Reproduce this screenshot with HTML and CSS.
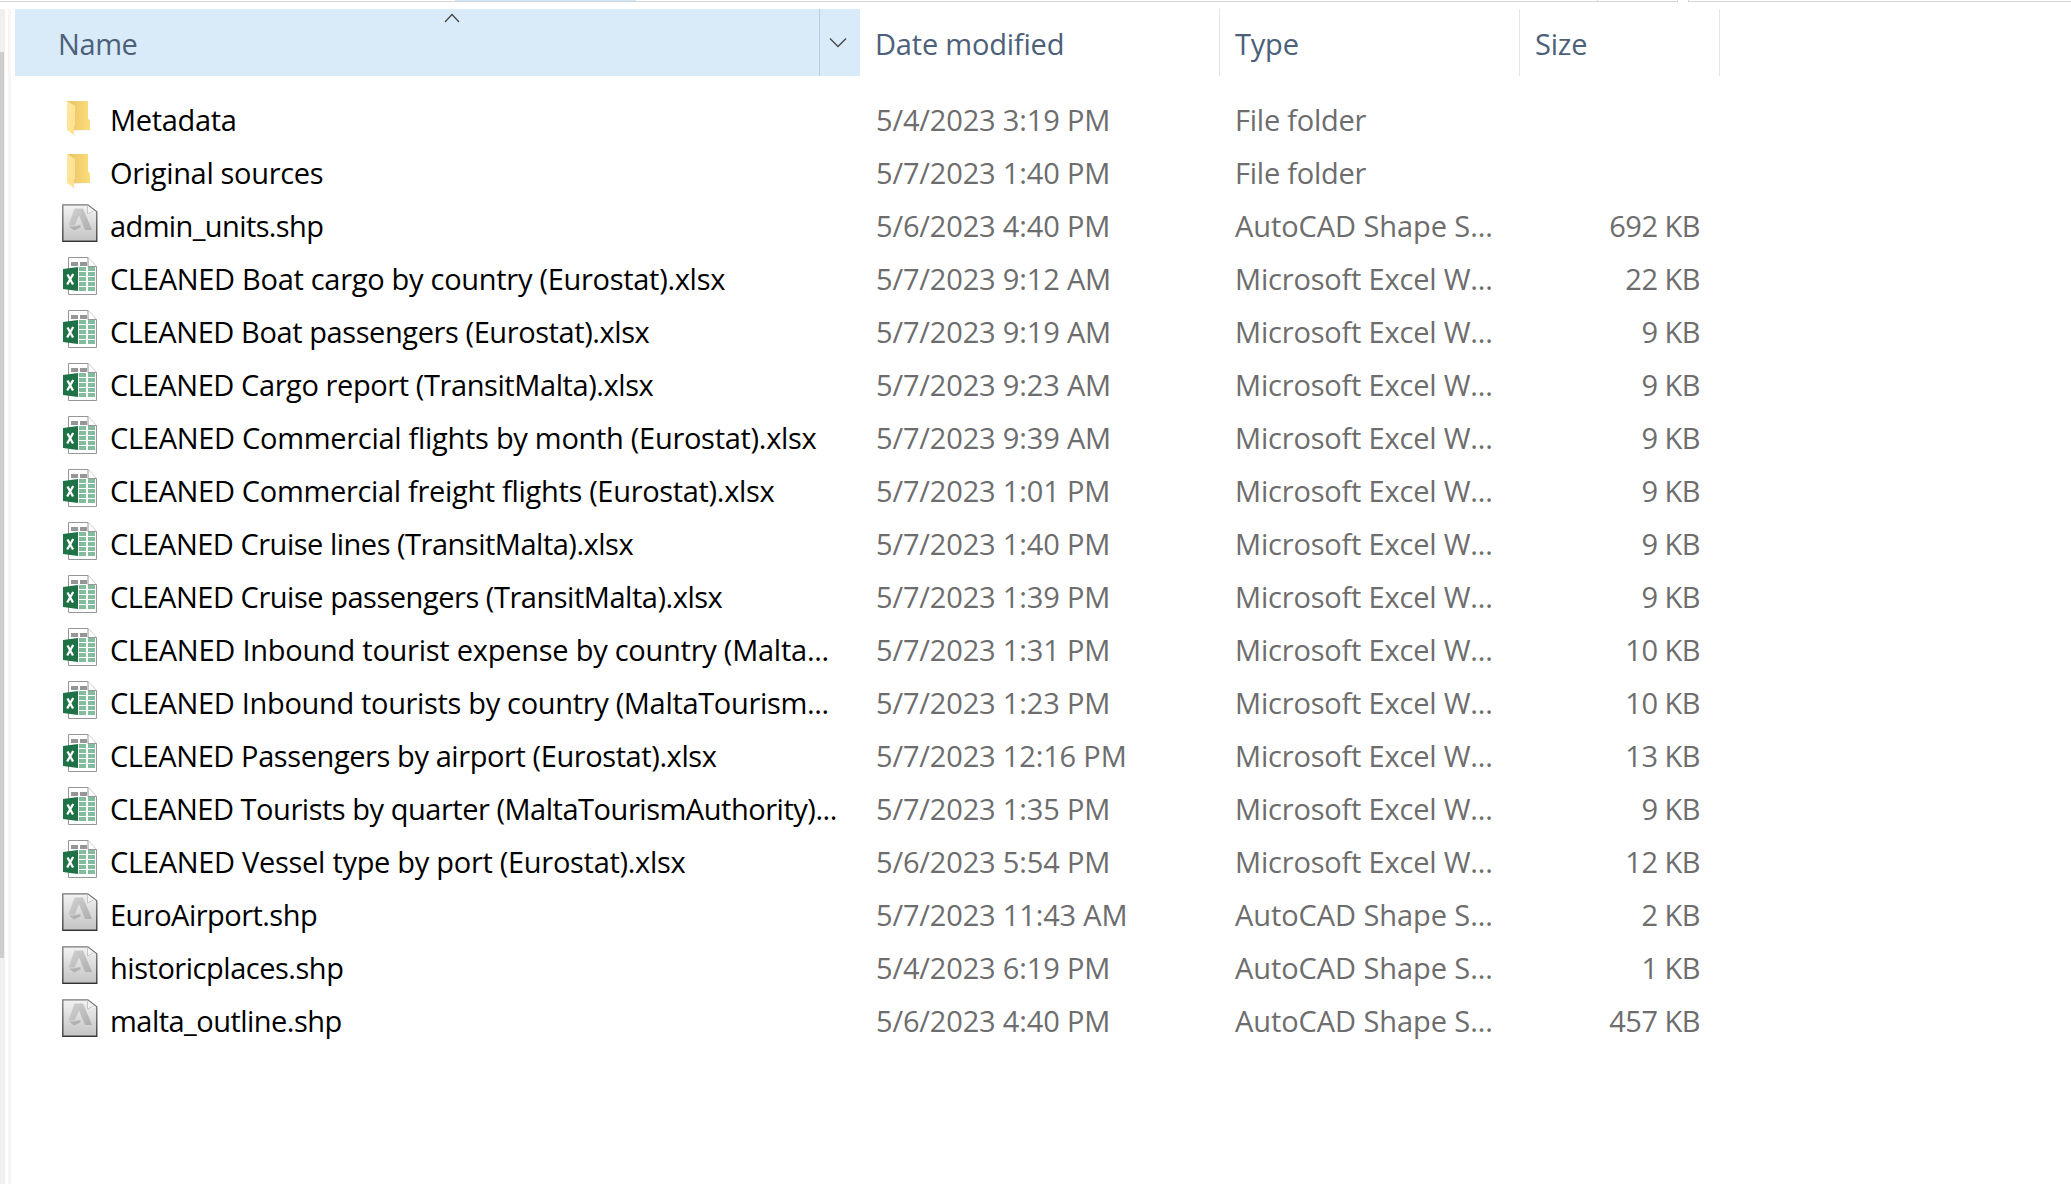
FILE: index.html
```html
<!DOCTYPE html>
<html lang="en">
<head>
<meta charset="utf-8">
<title>Files</title>
<link rel="stylesheet" href="styles.css">
</head>
<body>
<svg class="defs" width="0" height="0" aria-hidden="true">
  <defs>
    <linearGradient id="g-back" x1="0" x2="1" y1="0" y2="0"><stop offset="0.2" stop-color="#ebc768"/><stop offset="1" stop-color="#fddd7c"/></linearGradient>
    <linearGradient id="g-flap" x1="0" x2="1" y1="0" y2="1"><stop offset="0" stop-color="#ffe8a3"/><stop offset="1" stop-color="#ffe08a"/></linearGradient>
    <linearGradient id="g-page" x1="0" x2="0" y1="0" y2="1"><stop offset="0" stop-color="#f3f3f3"/><stop offset="1" stop-color="#c3c3c3"/></linearGradient>
    <linearGradient id="g-edge" x1="0" x2="0" y1="0" y2="1"><stop offset="0" stop-color="#777"/><stop offset="1" stop-color="#333"/></linearGradient>
    <linearGradient id="g-a" x1="0" x2="1" y1="0" y2="1"><stop offset="0" stop-color="#d2d2d2"/><stop offset="1" stop-color="#adadad"/></linearGradient>
  </defs>
  <symbol id="folder" viewBox="0 0 36 40">
    <path d="M12 34l18-1-1-1H12zM11 39l4-1-2-1z" fill="#eee"/>
    <path d="M5 4h21v17.500l2 2V33H8z" fill="url(#g-back)"/>
    <path d="M5 4l8 5v19.500l-1 1V38l-7-5z" fill="url(#g-flap)"/>
  </symbol>
  <symbol id="shp" viewBox="0 0 36 40">
    <path d="M.8 1.800h25l9 7v29.500H.8z" fill="url(#g-page)" stroke="url(#g-edge)" stroke-width="1.300"/>
    <path d="M1.500 38.300h33" stroke="#333" stroke-width="1.200"/>
    <path d="M25.500 2.500v8.500l8.500-2z" fill="#f4f4f4"/>
    <path d="M25.500 2.500v8.500l6-3" fill="none" stroke="#c6c6c6" stroke-width="1"/>
    <path d="M12.500 5.500h8.500l9 21.500h-7L17 12.500 12.500 22.500H6.500z" fill="url(#g-a)"/>
    <path d="M7 23.500h4.500l7-1.500v2.500L12 27.500z" fill="#b1b1b1"/>
  </symbol>
  <symbol id="xlsx" viewBox="0 0 36 40">
    <path d="M6.500 1.500h19.500l8.500 9v28h-28z" fill="#fff" stroke="#969696"/>
    <path d="M26 1.500v9h8.500" fill="#fff" stroke="#969696"/>
    <path d="M9 6h7v4H9zM18 6h7v4h-7z" fill="#969696"/>
    <path d="M17 11h7v4h-7zM26 11h7v4h-7zM17 16h7v4h-7zM26 16h7v4h-7zM17 21h7v4h-7zM26 21h7v4h-7zM17 26h7v4h-7zM26 26h7v4h-7zM17 31h7v4h-7zM26 31h7v4h-7z" fill="#84bd9e"/>
    <path d="M1 13l15-2v24L1 33z" fill="#1f7245"/>
    <path d="M5.500 18.500l5.500 10M11.200 18l-6 10.500" fill="none" stroke="#fff" stroke-width="2.300"/>
  </symbol>
</svg>
<div class="window">
  <div class="scrollbar"><div class="thumb"></div></div>
  <div class="splitter"></div>
  <main class="pane">
    <div class="topline"><i class="tab"></i><i class="tick"></i><i class="gap"></i></div>
    <header class="head">
      <div class="h-name"><span>Name</span>
        <svg class="sort" width="16" height="10" viewBox="0 0 16 10"><path d="M1 9l7-7.500L15 9" fill="none" stroke="#444" stroke-width="1.300"/></svg>
        <div class="drop"><svg width="18" height="12" viewBox="0 0 18 12"><path d="M1 1.500l8 8 8-8" fill="none" stroke="#444" stroke-width="1.300"/></svg></div>
      </div>
      <div class="h-date">Date modified</div><div class="h-type">Type</div><div class="h-size">Size</div>
    </header>
    <div class="list">
      <div class="row"><svg class="icon"><use href="#folder"/></svg><span class="name n1">Metadata</span><span class="date">5/4/2023 3:19 PM</span><span class="type fold">File folder</span><span class="size"></span></div>
      <div class="row"><svg class="icon"><use href="#folder"/></svg><span class="name n2">Original sources</span><span class="date">5/7/2023 1:40 PM</span><span class="type fold">File folder</span><span class="size"></span></div>
      <div class="row"><svg class="icon"><use href="#shp"/></svg><span class="name n3">admin_units.shp</span><span class="date">5/6/2023 4:40 PM</span><span class="type cad">AutoCAD Shape S...</span><span class="size">692 KB</span></div>
      <div class="row"><svg class="icon"><use href="#xlsx"/></svg><span class="name n4">CLEANED Boat cargo by country (Eurostat).xlsx</span><span class="date">5/7/2023 9:12 AM</span><span class="type">Microsoft Excel W...</span><span class="size">22 KB</span></div>
      <div class="row"><svg class="icon"><use href="#xlsx"/></svg><span class="name n5">CLEANED Boat passengers (Eurostat).xlsx</span><span class="date">5/7/2023 9:19 AM</span><span class="type">Microsoft Excel W...</span><span class="size">9 KB</span></div>
      <div class="row"><svg class="icon"><use href="#xlsx"/></svg><span class="name n6">CLEANED Cargo report (TransitMalta).xlsx</span><span class="date">5/7/2023 9:23 AM</span><span class="type">Microsoft Excel W...</span><span class="size">9 KB</span></div>
      <div class="row"><svg class="icon"><use href="#xlsx"/></svg><span class="name n7">CLEANED Commercial flights by month (Eurostat).xlsx</span><span class="date">5/7/2023 9:39 AM</span><span class="type">Microsoft Excel W...</span><span class="size">9 KB</span></div>
      <div class="row"><svg class="icon"><use href="#xlsx"/></svg><span class="name n8">CLEANED Commercial freight flights (Eurostat).xlsx</span><span class="date">5/7/2023 1:01 PM</span><span class="type">Microsoft Excel W...</span><span class="size">9 KB</span></div>
      <div class="row"><svg class="icon"><use href="#xlsx"/></svg><span class="name n9">CLEANED Cruise lines (TransitMalta).xlsx</span><span class="date">5/7/2023 1:40 PM</span><span class="type">Microsoft Excel W...</span><span class="size">9 KB</span></div>
      <div class="row"><svg class="icon"><use href="#xlsx"/></svg><span class="name n10">CLEANED Cruise passengers (TransitMalta).xlsx</span><span class="date">5/7/2023 1:39 PM</span><span class="type">Microsoft Excel W...</span><span class="size">9 KB</span></div>
      <div class="row"><svg class="icon"><use href="#xlsx"/></svg><span class="name n11">CLEANED Inbound tourist expense by country (Malta...</span><span class="date">5/7/2023 1:31 PM</span><span class="type">Microsoft Excel W...</span><span class="size">10 KB</span></div>
      <div class="row"><svg class="icon"><use href="#xlsx"/></svg><span class="name n12">CLEANED Inbound tourists by country (MaltaTourism...</span><span class="date">5/7/2023 1:23 PM</span><span class="type">Microsoft Excel W...</span><span class="size">10 KB</span></div>
      <div class="row"><svg class="icon"><use href="#xlsx"/></svg><span class="name n13">CLEANED Passengers by airport (Eurostat).xlsx</span><span class="date">5/7/2023 12:16 PM</span><span class="type">Microsoft Excel W...</span><span class="size">13 KB</span></div>
      <div class="row"><svg class="icon"><use href="#xlsx"/></svg><span class="name n14">CLEANED Tourists by quarter (MaltaTourismAuthority)...</span><span class="date">5/7/2023 1:35 PM</span><span class="type">Microsoft Excel W...</span><span class="size">9 KB</span></div>
      <div class="row"><svg class="icon"><use href="#xlsx"/></svg><span class="name n15">CLEANED Vessel type by port (Eurostat).xlsx</span><span class="date">5/6/2023 5:54 PM</span><span class="type">Microsoft Excel W...</span><span class="size">12 KB</span></div>
      <div class="row"><svg class="icon"><use href="#shp"/></svg><span class="name n16">EuroAirport.shp</span><span class="date">5/7/2023 11:43 AM</span><span class="type cad">AutoCAD Shape S...</span><span class="size">2 KB</span></div>
      <div class="row"><svg class="icon"><use href="#shp"/></svg><span class="name n17">historicplaces.shp</span><span class="date">5/4/2023 6:19 PM</span><span class="type cad">AutoCAD Shape S...</span><span class="size">1 KB</span></div>
      <div class="row"><svg class="icon"><use href="#shp"/></svg><span class="name n18">malta_outline.shp</span><span class="date">5/6/2023 4:40 PM</span><span class="type cad">AutoCAD Shape S...</span><span class="size">457 KB</span></div>
    </div>
  </main>
</div>
</body>
</html>
```
FILE: styles.css
```css
* { box-sizing: border-box; }
body { margin: 0; background: #fff; font: 29px/53px "Open Sans", "Noto Sans", sans-serif; color: #000; overflow: hidden; }
.defs { position: absolute; }
.window { display: flex; width: 2071px; height: 1184px; overflow: hidden; padding-top: 1px; }
.scrollbar { width: 5px; margin-top: 8px; background: #f0f0f0; padding-top: 43px; }
.thumb { width: 4px; height: 906px; background: #cdcdcd; }
.splitter { width: 3px; margin: 8px 4px 0 3px; background: #f6f6f6; }
.pane { flex: 1; }
.topline { position: relative; height: 8px; border-top: 1px solid #d5d7d7; margin-left: -15px; }
.topline i { position: absolute; }
.tab { left: 455px; top: -2px; width: 181px; height: 1px; background: #cce8ff; }
.tick { left: 1597px; top: -2px; width: 1px; height: 2px; background: #d5d5d5; }
.gap { left: 1677px; top: -2px; width: 12px; height: 2px; background: #fff; border: solid #d5d5d5; border-width: 0 1px; }
.head { display: grid; grid-template-columns: 845px 360px 300px 200px; grid-template-rows: 67px; height: 67px; line-height: 70px; color: #4c607a; letter-spacing: -0.2px; }
.head > div { white-space: nowrap; }
.h-name { position: relative; display: flex; justify-content: space-between; background: #d9ebf9; padding-left: 43px; }
.h-name span { letter-spacing: -0.4px; }
.sort { position: absolute; left: 429px; top: 4px; }
.drop { width: 41px; border-left: 1px solid #b9cfe2; display: flex; padding: 28px 0 0 9px; }
.h-date, .h-type, .h-size { padding-left: 15px; border-right: 1px solid #e5e5e5; }
.list { padding-top: 17px; }
.row { display: grid; grid-template-columns: 36px 764px 359px 300px 165px; height: 53px; margin-left: 47px; white-space: nowrap; color: #6d6d6d; }
.icon { width: 36px; height: 40px; margin-top: 4px; }
.name { color: #000; padding-left: 12px; }
.date { padding-left: 14px; letter-spacing: -0.16px; }
.type { padding-left: 14px; letter-spacing: -0.19px; }
.cad { letter-spacing: -0.08px; }
.fold { letter-spacing: -0.24px; }
.size { text-align: right; letter-spacing: -0.5px; margin-right: -14px; }

/* Per-name tracking */
.n1, .n2, .n12 { letter-spacing: -0.33px; }
.n3 { letter-spacing: -0.61px; }
.n4, .n7, .n15 { letter-spacing: -0.29px; }
.n5, .n6, .n13 { letter-spacing: -0.41px; }
.n8 { letter-spacing: -0.32px; }
.n9 { letter-spacing: -0.49px; }
.n10, .n14, .n17 { letter-spacing: -0.47px; }
.n11 { letter-spacing: -0.25px; }
.n16, .n18 { letter-spacing: -0.53px; }
```
